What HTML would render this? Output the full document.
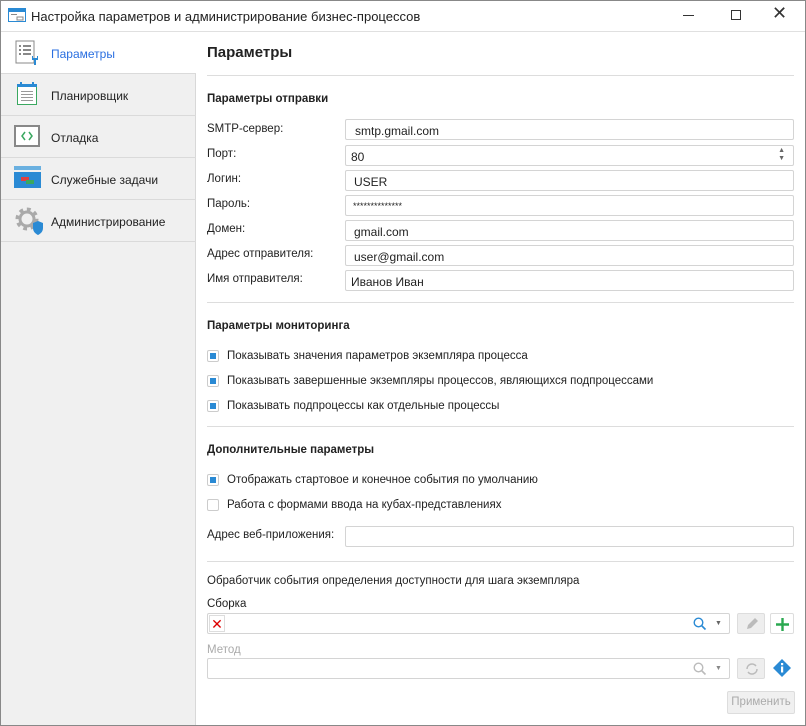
<!DOCTYPE html><html><head><meta charset="utf-8"><style>
*{box-sizing:border-box}body{margin:0;width:806px;height:726px;font-family:"Liberation Sans",sans-serif;font-size:11.5px;color:#222;background:#fff;position:relative;overflow:hidden}
.a{position:absolute}
.win{left:0;top:0;width:806px;height:726px;border:1px solid #888}
.side{left:1px;top:32px;width:195px;height:693px;background:#f0f0f0;border-right:1px solid #d8d8d8}
.it{position:absolute;left:0;width:195px;height:42px;border-bottom:1px solid #dadada;font-size:12px}
.it span{position:absolute;left:50px;top:15px}
.lbl{left:207px}
.in{left:345px;width:449px;height:21px;border:1px solid #d4d4d4;border-radius:2px;padding:4px 7px;font-size:12px}
.hr{left:207px;width:587px;height:1px;background:#ddd}
h3{position:absolute;margin:0;font-size:11.5px;font-weight:bold;left:207px}
.cb{left:207px;width:12px;height:12px;border:1px solid #ccc;border-radius:2px;background:#fff}
.cb.on::after{content:"";position:absolute;left:2px;top:2px;width:6px;height:6px;background:#2a8ad4}
.ct{left:227px}
</style></head><body>
<div class="a win"></div>
<div class="a" style="left:1px;top:31px;width:804px;height:1px;background:#e0e0e0"></div>
<svg class="a" style="left:8px;top:8px" width="18" height="14"><rect x=".5" y=".5" width="17" height="13" fill="#fff" stroke="#2a8ad4"/><rect x="1" y="1" width="16" height="3" fill="#2a8ad4"/><rect x="3" y="6" width="6" height="1" fill="#888"/><rect x="9" y="9" width="6" height="3" fill="none" stroke="#888"/></svg>
<div class="a" style="left:31px;top:9px;font-size:13px">Настройка параметров и администрирование бизнес-процессов</div>
<div class="a" style="left:683px;top:15px;width:11px;height:1px;background:#333"></div>
<div class="a" style="left:731px;top:10px;width:10px;height:10px;border:1px solid #333"></div>
<div class="a" style="left:772px;top:3px;font-size:18px;color:#333">✕</div>
<div class="a side">
<div class="it" style="top:0;background:#fff;color:#2a6fe0"><svg class="a" style="left:14px;top:8px" width="26" height="26"><rect x="1" y="1" width="18" height="22" fill="#fff" stroke="#888"/><g fill="#888"><rect x="4" y="5" width="2" height="2"/><rect x="8" y="5" width="8" height="2"/><rect x="4" y="9" width="2" height="2"/><rect x="8" y="9" width="8" height="2"/><rect x="4" y="13" width="2" height="2"/><rect x="8" y="13" width="8" height="2"/></g><path d="M17 16 v4 h2 v5 h2 v-5 h2 v-4 h-1 v2 h-4 v-2z" fill="#2a8ad4"/></svg><span>Параметры</span></div>
<div class="it" style="top:42px"><svg class="a" style="left:15px;top:8px" width="22" height="24"><rect x="1.5" y="3.5" width="19" height="19" fill="#fff" stroke="#3aa860"/><rect x="1" y="2" width="20" height="3" fill="#2a8ad4"/><rect x="4" y="0" width="2" height="4" fill="#2a8ad4"/><rect x="16" y="0" width="2" height="4" fill="#2a8ad4"/><g fill="#999"><rect x="5" y="9" width="12" height="1"/><rect x="5" y="12" width="12" height="1"/><rect x="5" y="15" width="12" height="1"/><rect x="5" y="18" width="12" height="1"/></g></svg><span>Планировщик</span></div>
<div class="it" style="top:84px"><svg class="a" style="left:13px;top:9px" width="26" height="22"><rect x="1" y="1" width="24" height="20" fill="#fff" stroke="#888" stroke-width="2"/><path d="M11 7l-3 4 3 4M15 7l3 4-3 4" fill="none" stroke="#3aa860" stroke-width="1.5"/></svg><span>Отладка</span></div>
<div class="it" style="top:126px"><svg class="a" style="left:13px;top:8px" width="27" height="22"><rect x="0" y="0" width="27" height="4" fill="#6ab0e0"/><rect x="0" y="6" width="27" height="16" fill="#2a8ad4"/><rect x="7" y="11" width="8" height="4" fill="#e04040"/><rect x="12" y="14" width="8" height="4" fill="#3aa860"/></svg><span>Служебные задачи</span></div>
<div class="it" style="top:168px"><svg class="a" style="left:14px;top:6px" width="28" height="30"><circle cx="12" cy="13" r="9" fill="none" stroke="#aaa" stroke-width="5" stroke-dasharray="3.5 3.5"/><circle cx="12" cy="13" r="7" fill="none" stroke="#aaa" stroke-width="3"/><path d="M18 17 l5 -2 5 2 v5 c0 4 -3 6 -5 7 c-2 -1 -5 -3 -5 -7z" fill="#2a8ad4"/></svg><span>Администрирование</span></div>
</div>
<div class="a" style="left:207px;top:44px;font-size:15px;font-weight:bold">Параметры</div>
<div class="a hr" style="top:75px"></div>
<h3 style="top:93px">Параметры отправки</h3>
<div class="a lbl" style="top:123px">SMTP-сервер:</div><div class="a in" style="top:119px;padding-left:9px">smtp.gmail.com</div>
<div class="a lbl" style="top:148px">Порт:</div><div class="a in" style="top:145px;padding-left:5px">80<span style="position:absolute;right:8px;top:1px;font-size:7px;line-height:8px;color:#666">▲<br>▼</span></div>
<div class="a lbl" style="top:173px">Логин:</div><div class="a in" style="top:170px;padding-left:8px">USER</div>
<div class="a lbl" style="top:198px">Пароль:</div><div class="a in" style="top:195px;padding-left:7px;font-size:9px;padding-top:5px">**************</div>
<div class="a lbl" style="top:223px">Домен:</div><div class="a in" style="top:220px;padding-left:8px">gmail.com</div>
<div class="a lbl" style="top:248px">Адрес отправителя:</div><div class="a in" style="top:245px;padding-left:8px">user@gmail.com</div>
<div class="a lbl" style="top:273px">Имя отправителя:</div><div class="a in" style="top:270px;padding-left:5px">Иванов Иван</div>
<div class="a hr" style="top:302px"></div>
<h3 style="top:320px">Параметры мониторинга</h3>
<div class="a cb on" style="top:350px"></div><div class="a ct" style="top:350px">Показывать значения параметров экземпляра процесса</div>
<div class="a cb on" style="top:375px"></div><div class="a ct" style="top:375px">Показывать завершенные экземпляры процессов, являющихся подпроцессами</div>
<div class="a cb on" style="top:400px"></div><div class="a ct" style="top:400px">Показывать подпроцессы как отдельные процессы</div>
<div class="a hr" style="top:426px"></div>
<h3 style="top:444px">Дополнительные параметры</h3>
<div class="a cb on" style="top:474px"></div><div class="a ct" style="top:474px">Отображать стартовое и конечное события по умолчанию</div>
<div class="a cb" style="top:499px"></div><div class="a ct" style="top:499px">Работа с формами ввода на кубах-представлениях</div>
<div class="a lbl" style="top:529px">Адрес веб-приложения:</div><div class="a in" style="top:526px"></div>
<div class="a hr" style="top:561px"></div>
<div class="a lbl" style="top:575px">Обработчик события определения доступности для шага экземпляра</div>
<div class="a lbl" style="top:598px">Сборка</div>
<div class="a" style="left:207px;top:613px;width:523px;height:21px;border:1px solid #d4d4d4;border-radius:2px"><div class="a" style="left:1px;top:1px;width:16px;height:17px;border:1px solid #ddd;color:#d00;font-size:14px;line-height:16px;text-align:center">✕</div>
<svg class="a" style="left:485px;top:3px" width="14" height="14"><circle cx="5.5" cy="5.5" r="4.3" fill="none" stroke="#2a8ad4" stroke-width="1.4"/><path d="M8.5 8.5l4 4" stroke="#2a8ad4" stroke-width="1.6"/></svg><div class="a" style="left:507px;top:6px;font-size:7px;color:#666">▼</div></div>
<div class="a" style="left:737px;top:613px;width:28px;height:21px;background:#eee;border:1px solid #ddd;border-radius:2px"><svg class="a" style="left:6px;top:2px" width="16" height="16"><path d="M3 13l1-4 7-7 3 3-7 7z" fill="#bbb"/></svg></div>
<div class="a" style="left:770px;top:613px;width:24px;height:21px;border:1px solid #ddd;border-radius:2px"><svg class="a" style="left:4px;top:3px" width="15" height="15"><path d="M7.5 1v13M1 7.5h13" stroke="#2aa850" stroke-width="2.4"/></svg></div>
<div class="a lbl" style="top:644px;color:#aaa">Метод</div>
<div class="a" style="left:207px;top:658px;width:523px;height:21px;border:1px solid #d4d4d4;border-radius:2px">
<svg class="a" style="left:485px;top:3px" width="14" height="14"><circle cx="5.5" cy="5.5" r="4.3" fill="none" stroke="#bbb" stroke-width="1.4"/><path d="M8.5 8.5l4 4" stroke="#bbb" stroke-width="1.6"/></svg><div class="a" style="left:507px;top:6px;font-size:7px;color:#888">▼</div></div>
<div class="a" style="left:737px;top:658px;width:28px;height:21px;background:#eee;border:1px solid #ddd;border-radius:2px"><svg class="a" style="left:6px;top:2px" width="16" height="16"><path d="M3 8a5 5 0 0 1 9-3M13 8a5 5 0 0 1-9 3" fill="none" stroke="#bbb" stroke-width="1.5"/></svg></div>
<svg class="a" style="left:772px;top:658px" width="20" height="20"><path d="M10 1l9 9-9 9-9-9z" fill="#2a8ad4"/><rect x="9" y="5" width="2.2" height="2.2" fill="#fff"/><rect x="9" y="8.5" width="2.2" height="6" fill="#fff"/></svg>
<div class="a" style="left:727px;top:691px;width:68px;height:23px;background:#f0f0f0;border:1px solid #ddd;border-radius:2px;color:#aaa;text-align:center;line-height:21px">Применить</div>
</body></html>
